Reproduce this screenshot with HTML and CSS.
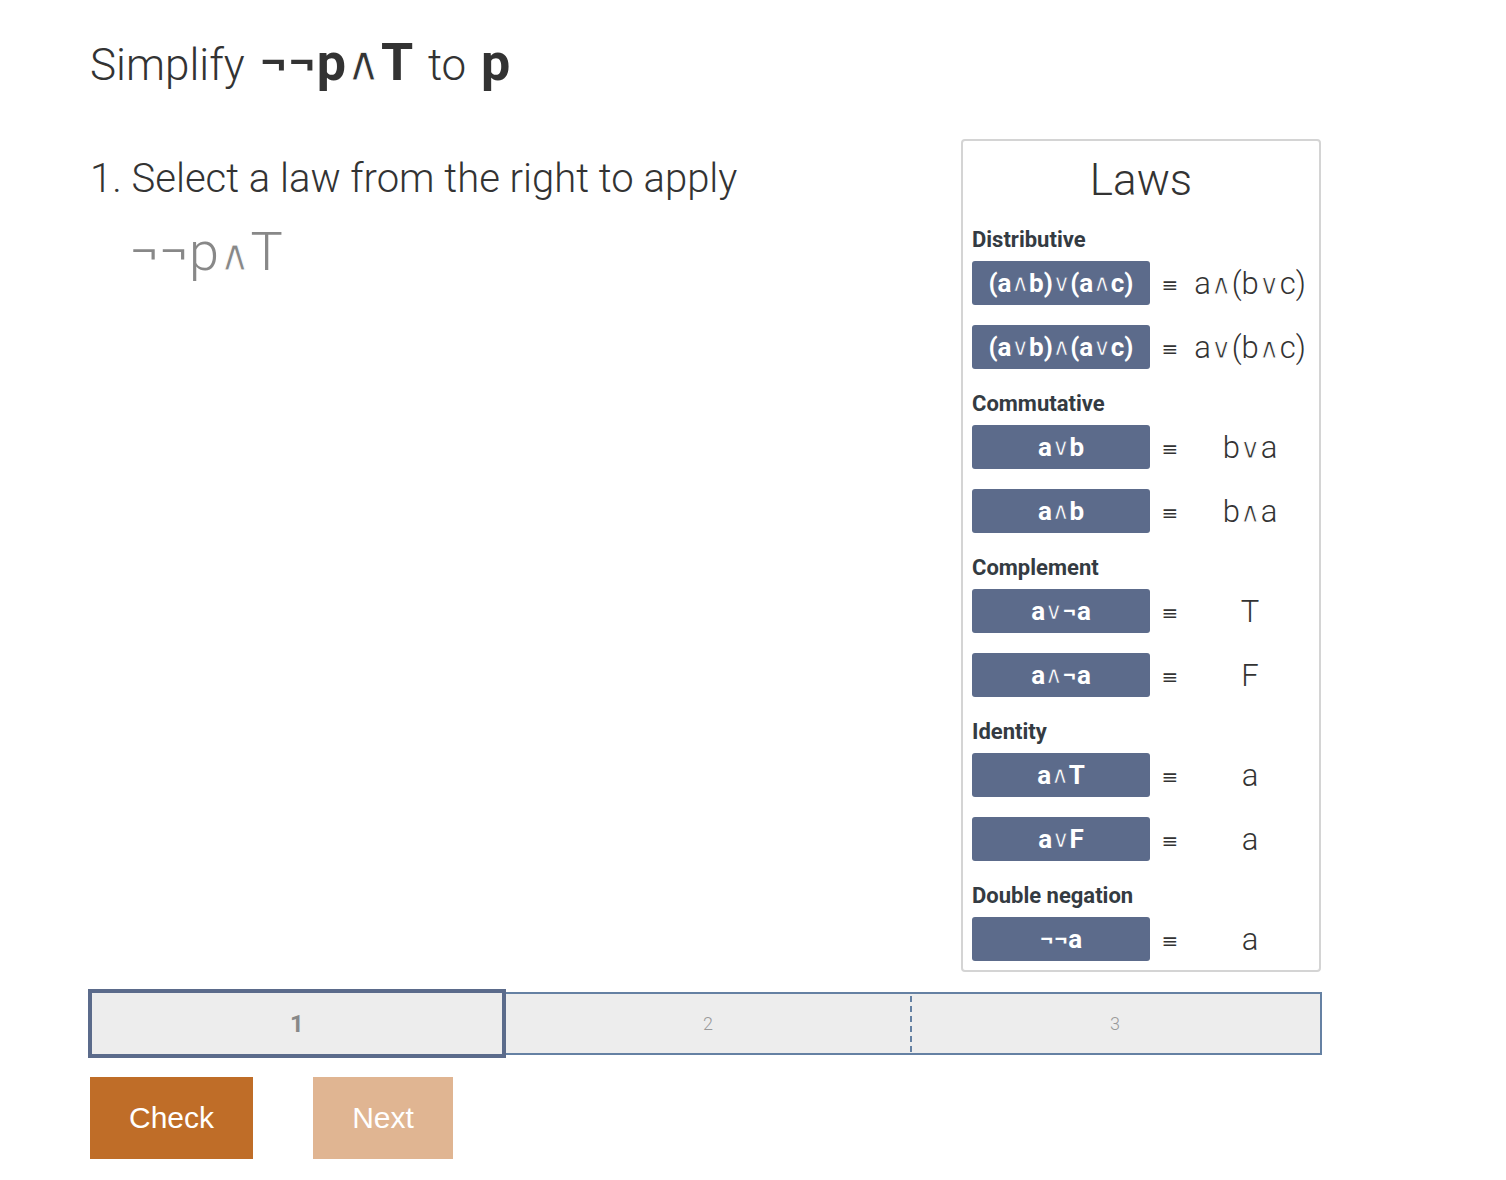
FILE: index.html
```html
<!DOCTYPE html>
<html>
<head>
<meta charset="utf-8">
<link rel="stylesheet" href="styles.css">
</head>
<body>
<div class="page">
  <h1 class="title">Simplify <b>¬¬p<span class="op">∧</span>T</b> to <b>p</b></h1>
  <div class="main">
    <div class="work">
      <div class="step-text">1. Select a law from the right to apply</div>
      <div class="expr">¬¬p<span class="op">∧</span>T</div>
    </div>
    <div class="laws">
      <div class="laws-title">Laws</div>
      <div class="cat">Distributive</div>
      <div class="law"><span class="law-btn">(a<span class="op">∧</span>b)<span class="op">∨</span>(a<span class="op">∧</span>c)</span><span class="eq">≡</span><span class="res">a<span class="op">∧</span>(b<span class="op">∨</span>c)</span></div>
      <div class="law"><span class="law-btn">(a<span class="op">∨</span>b)<span class="op">∧</span>(a<span class="op">∨</span>c)</span><span class="eq">≡</span><span class="res">a<span class="op">∨</span>(b<span class="op">∧</span>c)</span></div>
      <div class="cat">Commutative</div>
      <div class="law"><span class="law-btn">a<span class="op">∨</span>b</span><span class="eq">≡</span><span class="res">b<span class="op">∨</span>a</span></div>
      <div class="law"><span class="law-btn">a<span class="op">∧</span>b</span><span class="eq">≡</span><span class="res">b<span class="op">∧</span>a</span></div>
      <div class="cat">Complement</div>
      <div class="law"><span class="law-btn">a<span class="op">∨</span>¬a</span><span class="eq">≡</span><span class="res">T</span></div>
      <div class="law"><span class="law-btn">a<span class="op">∧</span>¬a</span><span class="eq">≡</span><span class="res">F</span></div>
      <div class="cat">Identity</div>
      <div class="law"><span class="law-btn">a<span class="op">∧</span>T</span><span class="eq">≡</span><span class="res">a</span></div>
      <div class="law"><span class="law-btn">a<span class="op">∨</span>F</span><span class="eq">≡</span><span class="res">a</span></div>
      <div class="cat">Double negation</div>
      <div class="law"><span class="law-btn">¬¬a</span><span class="eq">≡</span><span class="res">a</span></div>
    </div>
  </div>
  <div class="progress">
    <div class="pstep active">1</div>
    <div class="pstep mid">2</div>
    <div class="pstep last">3</div>
  </div>
  <div class="actions">
    <button class="btn check">Check</button>
    <button class="btn next">Next</button>
  </div>
</div>
</body>
</html>
```
FILE: styles.css
```css
html, body {
  margin: 0;
  padding: 0;
  background: #fff;
}
body {
  font-family: Roboto, "Noto Sans", "DejaVu Sans", sans-serif;
  color: #333;
}
.op {
  font-family: "DejaVu Sans", sans-serif;
  font-weight: 400;
  font-size: 0.92em;
  -webkit-text-stroke: 0.9px #fff;
}
.law-btn .op {
  -webkit-text-stroke: 0.6px #5c6b8b;
}
.page {
  width: 1232px;
  padding-left: 90px;
  padding-top: 37px;
}
.title {
  margin: 0;
  height: 52px;
  font-size: 44px;
  font-weight: 300;
  line-height: 52px;
  color: #333;
}
.title b {
  font-weight: 700;
  font-size: 52px;
  margin: 0 4px;
}
.main {
  display: flex;
  justify-content: space-between;
  margin-top: 50px;
}
.work {
  padding-top: 16px;
}
.step-text {
  font-size: 40px;
  font-weight: 300;
  line-height: 47px;
  color: #333;
}
.expr {
  margin-top: 18px;
  margin-left: 40px;
  font-size: 54px;
  font-weight: 300;
  line-height: 63px;
  color: #888;
}
.expr .op {
  font-size: 0.8em;
  -webkit-text-stroke: 1px #fff;
}
.laws {
  width: 338px;
  margin-right: 1px;
  border: 2px solid #d4d4d4;
  border-radius: 4px;
  padding: 13px 9px 9px 9px;
}
.laws-title {
  text-align: center;
  font-size: 44px;
  font-weight: 300;
  line-height: 52px;
  color: #333;
}
.cat {
  margin-top: 23px;
  margin-bottom: 9px;
  font-size: 22px;
  font-weight: 700;
  line-height: 24px;
  color: #343b42;
}
.laws-title + .cat {
  margin-top: 22px;
}
.law {
  display: flex;
  align-items: center;
  height: 44px;
}
.law + .law {
  margin-top: 20px;
}
.law-btn {
  width: 178px;
  height: 44px;
  flex: none;
  display: flex;
  align-items: center;
  justify-content: center;
  background: #5c6b8b;
  border-radius: 3px;
  color: #fff;
  font-size: 26px;
  font-weight: 700;
  white-space: pre;
}
.eq {
  width: 40px;
  flex: none;
  text-align: center;
  font-size: 20px;
  padding-top: 3px;
  color: #333;
  font-family: "DejaVu Sans", sans-serif;
}
.res {
  flex: 1;
  text-align: center;
  font-size: 31px;
  font-weight: 300;
  color: #333;
}
.progress {
  display: flex;
  align-items: center;
  margin-top: 17px;
  margin-left: -2px;
  height: 69px;
}
.pstep {
  display: flex;
  align-items: center;
  justify-content: center;
  background-color: #ededed;
  box-sizing: border-box;
}
.pstep.active {
  width: 418px;
  height: 69px;
  border: 4px solid #5b6b8b;
  font-size: 24px;
  font-weight: 700;
  color: #888;
}
.pstep.mid, .pstep.last {
  height: 63px;
  border: 2px solid #6581a3;
  border-left: none;
  font-size: 18px;
  font-weight: 300;
  color: #999;
}
.pstep.mid {
  width: 404px;
  border-right: none;
}
.pstep.last {
  width: 412px;
  background-image: linear-gradient(to bottom, #6581a3 60%, transparent 60%);
  background-size: 1.5px 10px;
  background-repeat: repeat-y;
  background-position: 0 2px;
}
.actions {
  display: flex;
  gap: 60px;
  margin-top: 19px;
}
.btn {
  border: none;
  border-radius: 0;
  height: 82px;
  padding: 0;
  font-family: "Liberation Sans", Arial, sans-serif;
  font-size: 30px;
  color: #fff;
}
.btn.check {
  width: 163px;
  background: #bf6d28;
}
.btn.next {
  width: 140px;
  background: #e0b592;
}
```
